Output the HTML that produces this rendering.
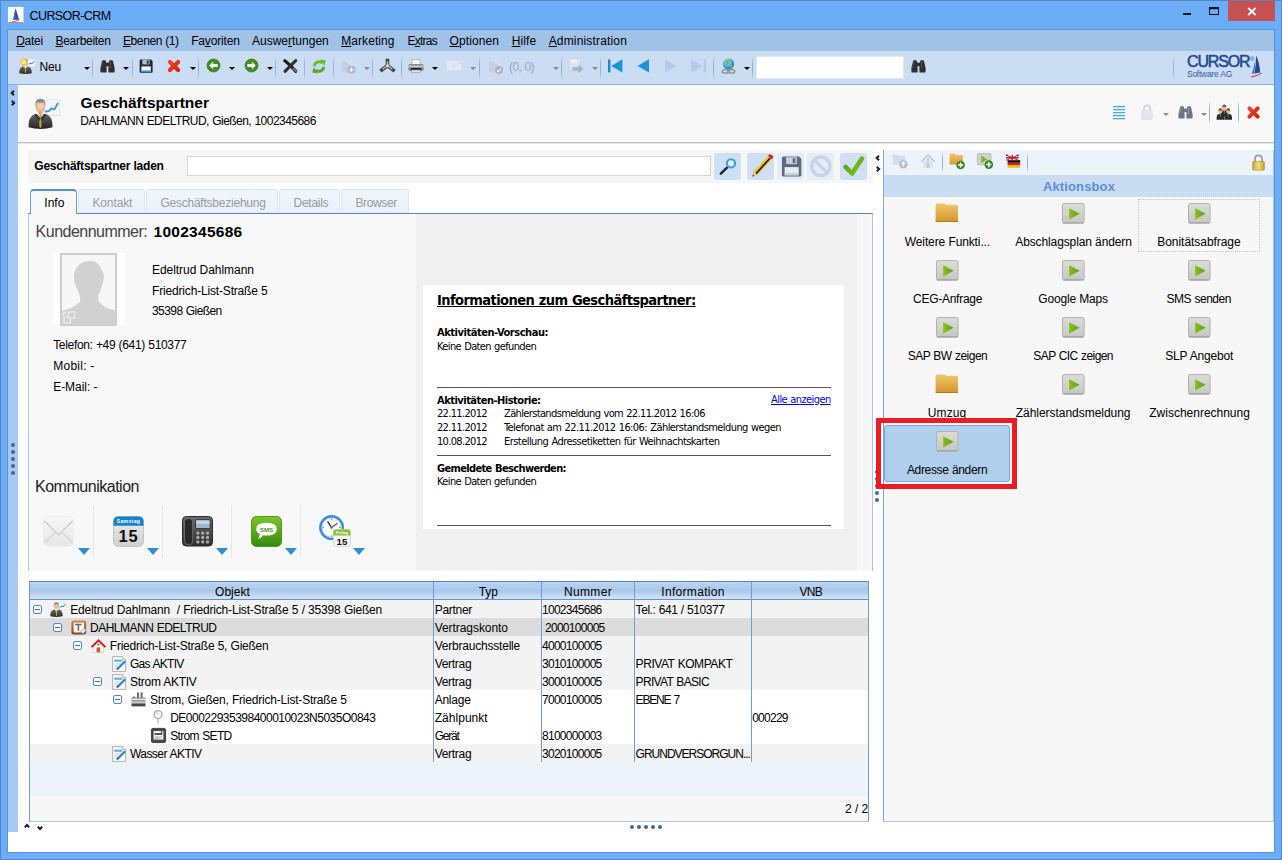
<!DOCTYPE html>
<html lang="de">
<head>
<meta charset="utf-8">
<title>CURSOR-CRM</title>
<style>
*{box-sizing:border-box;margin:0;padding:0}
html,body{width:1282px;height:860px;overflow:hidden;background:#6badf6}
body{font-family:"Liberation Sans",sans-serif;font-size:12px;color:#000;position:relative}
.a{position:absolute}
.t{position:absolute;white-space:nowrap;line-height:1}
svg{position:absolute;overflow:visible}
#frame{left:0;top:0;width:1282px;height:860px;background:#6badf6;border:1px solid #5584be}
#menubar{left:8px;top:30px;width:1266px;height:21px;background:#a1c2e7}
#toolbar{left:8px;top:51px;width:1266px;height:33px;background:#cbddf3}
#tbline{left:8px;top:84px;width:1266px;height:1px;background:#7fb2ec}
#content{left:8px;top:85px;width:1266px;height:767px;background:#fff}
#lstrip{left:8px;top:85px;width:10px;height:747px;background:#a7c9f5}
#header{left:18px;top:85px;width:1256px;height:57px;background:#f8f8f8}
#hline{left:18px;top:142px;width:1256px;height:2px;background:#bfbfbf;border-bottom:1px solid #e6e6e6}
.sep{position:absolute;width:1px;background:linear-gradient(#cbddf3,#8fb4e3 30%,#8fb4e3 70%,#cbddf3)}
.dd{position:absolute;width:0;height:0;border-left:3px solid transparent;border-right:3px solid transparent;border-top:3px solid #000}
.dd.g{border-top-color:#8c8c8c}

#loadrow{left:28px;top:150px;width:845px;height:33px;background:#f6f6f6}
#loadinput{left:187px;top:156px;width:524px;height:20px;background:#fff;border:1px solid #d4d4d4}
.lbtn{position:absolute;top:153px;width:27px;height:27px;border-radius:3px;background:#cfe0f5}
.lbtn.dis{background:#e4edf9}
.tab{position:absolute;top:189px;height:24px;background:linear-gradient(#f1f6fd,#e9f0fb);border:1px solid #dbe6f5;border-bottom:none;border-radius:3px 3px 0 0}
#tabinfo{left:30px;top:189px;width:47px;height:25px;background:#f8f8f8;border:1px solid #6c9ddc;border-top:2px solid #4f8fe0;border-bottom:none;border-radius:4px 4px 0 0}
#tabpanel{left:28px;top:213px;width:845px;height:358px;background:#f8f8f8;border:1px solid #a9c6ec;border-top:1px solid #4a86d8;border-bottom:none}
#htmlarea{left:416px;top:214px;width:441px;height:356px;background:#f0f0f0}
#htmlwhite{left:423px;top:285px;width:421px;height:244px;background:#fff}
.hr{position:absolute;left:437px;width:394px;height:1px;background:#555}
#photo{left:53px;top:253px;width:72px;height:72px;background:#fff}
.csep{position:absolute;top:506px;width:1px;height:52px;background:#e6e6e6}
.ctri{position:absolute;top:548px;width:0;height:0;border-left:6px solid transparent;border-right:6px solid transparent;border-top:7px solid #2e8fd6}
#tree{left:29px;top:581px;width:840px;height:241px;background:#f7f7f7;border:1px solid #6f9ddb;border-bottom-color:#a9c7ec}
#treehead{left:30px;top:581px;width:838px;height:19px;background:linear-gradient(#bdd4f1,#a9c6eb 50%,#d6e4f6);border-top:1px solid #4a86d8;border-bottom:1px solid #5b92dc}
.row{position:absolute;left:30px;width:838px;height:18px}
.vl{position:absolute;top:581px;width:1px;height:181px;background:#6f9ddb}
.exp{position:absolute;width:9px;height:9px;border:1px solid #4f86d4;border-radius:2px;background:#fff}
.exp:after{content:"";position:absolute;left:1px;top:3px;width:5px;height:1px;background:#3a6fc0}
#rpanel{left:883px;top:150px;width:391px;height:672px;background:#f7f7f7;border:1px solid #a9c7ec;border-left-color:#7ba7e0;border-top:none}
#rtool{left:884px;top:150px;width:389px;height:25px;background:#edf3fb}
#rhead{left:884px;top:175px;width:389px;height:22px;background:#c9dcf2}
#redbox{left:876px;top:418px;width:141px;height:71px;border:5px solid #ed1c24}
#selitem{left:884px;top:425px;width:126px;height:57px;background:#b1d0ee;border:1px solid #7aa6de;border-radius:3px}
#focus{left:1138px;top:199px;width:122px;height:53px;border:1px dotted #c2c2c2}
.dot{position:absolute;width:4px;height:4px;border-radius:50%;background:#46648e}
.rsep{position:absolute;top:152px;width:1px;height:21px;background:linear-gradient(#edf3fb,#8fb4e3 30%,#8fb4e3 70%,#edf3fb)}
</style>
</head>
<body>
<div id="frame" class="a"></div>
<div class="a" style="left:7px;top:29px;width:1268px;height:824px;border:1px solid #5a93d8"></div>
<!-- TITLEBAR -->
<div id="titlebar">
</div>
<!-- MENUBAR -->
<div id="menubar" class="a"></div>
<!-- TOOLBAR -->
<div id="toolbar" class="a"></div>
<div id="tbline" class="a"></div>
<!-- CONTENT -->
<div id="content" class="a"></div>
<div id="lstrip" class="a"></div>
<div id="header" class="a"></div>
<div id="hline" class="a"></div>
<!-- LEFTPANEL -->
<div id="loadrow" class="a"></div>
<div id="loadinput" class="a"></div>
<div class="lbtn" style="left:714px"></div>
<div class="lbtn" style="left:747px"></div>
<div class="lbtn dis" style="left:777px"></div>
<div class="lbtn dis" style="left:807px"></div>
<div class="lbtn" style="left:840px"></div>
<div class="tab" style="left:78px;width:67px"></div>
<div class="tab" style="left:146px;width:132px"></div>
<div class="tab" style="left:279px;width:61px"></div>
<div class="tab" style="left:341px;width:68px"></div>
<div id="tabpanel" class="a"></div>
<div id="tabinfo" class="a"></div>
<div id="htmlarea" class="a"></div>
<div class="a" style="left:857px;top:214px;width:12px;height:356px;background:#f7f7f7"></div>
<div id="htmlwhite" class="a"></div>
<div class="hr" style="top:387px"></div>
<div class="hr" style="top:455px"></div>
<div class="hr" style="top:525px"></div>
<div id="photo" class="a"></div>
<div class="csep" style="left:93px"></div>
<div class="csep" style="left:162px"></div>
<div class="csep" style="left:231px"></div>
<div class="csep" style="left:300px"></div>
<div class="ctri" style="left:78px"></div>
<div class="ctri" style="left:147px"></div>
<div class="ctri" style="left:216px"></div>
<div class="ctri" style="left:285px"></div>
<div class="ctri" style="left:353px"></div>

<!-- TREE -->
<div id="tree" class="a"></div>
<div class="row" style="top:600px;height:90px;background:#f3f3f3"></div>
<div class="row" style="top:618px;background:#dcdcdc"></div>
<div class="row" style="top:690px;height:54px;background:#fff"></div>
<div class="row" style="top:744px;background:#f3f3f3"></div>
<div class="row" style="top:762px;height:34px;background:#edf3fb"></div>
<div id="treehead" class="a"></div>
<div class="vl" style="left:433px"></div>
<div class="vl" style="left:541px"></div>
<div class="vl" style="left:634px"></div>
<div class="vl" style="left:751px"></div>
<div class="exp" style="left:33px;top:605px"></div>
<div class="exp" style="left:53px;top:623px"></div>
<div class="exp" style="left:73px;top:641px"></div>
<div class="exp" style="left:93px;top:677px"></div>
<div class="exp" style="left:113px;top:695px"></div>

<!-- RIGHTPANEL -->
<div id="rpanel" class="a"></div>
<div id="rtool" class="a"></div>
<div id="rhead" class="a"></div>
<div class="rsep" style="left:942px"></div>
<div class="rsep" style="left:1027px"></div>
<div id="focus" class="a"></div>
<div id="selitem" class="a"></div>
<div class="dot" style="left:11px;top:443px"></div>
<div class="dot" style="left:11px;top:450px"></div>
<div class="dot" style="left:11px;top:457px"></div>
<div class="dot" style="left:11px;top:464px"></div>
<div class="dot" style="left:11px;top:471px"></div>
<div class="dot" style="left:875px;top:470px"></div>
<div class="dot" style="left:875px;top:477px"></div>
<div class="dot" style="left:875px;top:484px"></div>
<div class="dot" style="left:875px;top:491px"></div>
<div class="dot" style="left:875px;top:498px"></div>
<div class="dot" style="left:630px;top:825px"></div>
<div class="dot" style="left:637px;top:825px"></div>
<div class="dot" style="left:644px;top:825px"></div>
<div class="dot" style="left:651px;top:825px"></div>
<div class="dot" style="left:658px;top:825px"></div>
<svg style="left:8px;top:7px" width="16" height="16" viewBox="0 0 16 16"><rect width="16" height="16" fill="#fdfdfd"/><rect y="15" width="16" height="1" fill="#9a9a9a"/><rect x="15" width="1" height="16" fill="#d8cfc0"/><path d="M7.6 1 L11 12.4 L5.2 12.9 Z" fill="#24509e"/><path d="M7.2 2.5 L7.6 12.7 L5 12.9 Z" fill="#3f6dbb"/><path d="M3.9 14.5 Q8 14 11.7 12 L11.5 13.1 Q8 15 4.1 15.2 Z" fill="#d9214c"/></svg>
<svg style="left:1183px;top:13px" width="8" height="2" viewBox="0 0 8 2"><rect width="8" height="2" fill="#111"/></svg>
<svg style="left:1209px;top:7px" width="10" height="8" viewBox="0 0 10 8"><rect x="0.5" y="0.5" width="9" height="7" fill="none" stroke="#111"/><rect width="10" height="2.2" fill="#111"/></svg>
<svg style="left:1228px;top:1px" width="47" height="20" viewBox="0 0 47 20"><rect width="47" height="20" fill="#c75050"/><path d="M20.2 7 L27.6 14 M27.6 7 L20.2 14" stroke="#fff" stroke-width="1.8"/></svg>
<svg style="left:18.7px;top:57.8px" width="17" height="16" viewBox="0 0 17 16"><defs><linearGradient id="g1" x1="0" y1="0" x2="0" y2="1"><stop offset="0" stop-color="#686868"/><stop offset="1" stop-color="#2a2a2a"/></linearGradient></defs><rect x="8.8" y="1.2" width="7.4" height="7.2" fill="#fafbfd" stroke="#d5dbe4" stroke-width="0.6"/><path d="M9.6 6.4 L11.6 5.2 L13 5.6 L15.4 3" fill="none" stroke="#2f9be0" stroke-width="1.1"/><path d="M0.3 15.3 Q0 9.6 3.8 8.4 L9.2 8.4 Q13 9.6 12.7 15.3 Q6.5 16.6 0.3 15.3Z" fill="url(#g1)"/><path d="M4.4 8.4 L6.5 10.6 L8.6 8.4 L7.4 7.8 L5.6 7.8Z" fill="#f4f4f4"/><path d="M5.8 9.2 L7.2 9.2 L7 14.4 L6.5 15.2 L6 14.4Z" fill="#d4ac1c"/><ellipse cx="6.5" cy="4.8" rx="2.7" ry="3.3" fill="#ecb893"/><path d="M5.2 2.6 Q5.6 0.9 7.4 1.1 Q9.2 1.5 9.2 4 Q8.6 2.6 7.2 2.6Z" fill="#8c8c8c"/><circle cx="5" cy="4.4" r="3.4" fill="#f2c63c" opacity="0.9"/><circle cx="4.8" cy="4.2" r="1.9" fill="#fdeea0"/><path d="M5 0.2 V1.2 M5 7.6 V8.6 M0.8 4.4 H1.8 M2 1.4 L2.7 2.1 M2 7.4 L2.7 6.7" stroke="#f2c63c" stroke-width="0.8"/></svg>
<svg style="left:84px;top:67px" width="6" height="3" viewBox="0 0 6 3"><path d="M0 0 L6 0 L3 3Z" fill="#000"/></svg>
<div class="sep" style="left:92px;top:56px;height:24px"></div>
<svg style="left:100px;top:59px" width="15" height="14" viewBox="0 0 15 14"><path d="M1.9 2.4 Q1.9 1.2 3.2 1.2 L4.6 1.2 Q5.9 1.2 5.9 2.4 L6.6 9 L6.6 12.4 Q6.6 13.6 5.4 13.6 L1.6 13.6 Q0.4 13.6 0.4 12.4 L0.4 9Z" fill="#2e2e2e"/><path d="M9.1 2.4 Q9.1 1.2 10.4 1.2 L11.8 1.2 Q13.1 1.2 13.1 2.4 L14.6 9 L14.6 12.4 Q14.6 13.6 13.4 13.6 L9.6 13.6 Q8.4 13.6 8.4 12.4 L8.4 9Z" fill="#2e2e2e"/><rect x="5.6" y="3.6" width="3.8" height="3.6" fill="#2e2e2e"/><path d="M2.4 2.6 L2.9 2.6 L2 9 L1.4 9Z M9.9 2.6 L10.5 2.6 L11 9 L10.3 9Z" fill="#6d6d6d"/></svg>
<svg style="left:123px;top:67px" width="6" height="3" viewBox="0 0 6 3"><path d="M0 0 L6 0 L3 3Z" fill="#000"/></svg>
<div class="sep" style="left:132px;top:56px;height:24px"></div>
<svg style="left:139px;top:59px" width="14" height="14" viewBox="0 0 14 14"><path d="M0.6 1.4 Q0.6 0.4 1.6 0.4 L12 0.4 L13.6 2 L13.6 12.8 Q13.6 13.7 12.6 13.7 L1.6 13.7 Q0.6 13.7 0.6 12.8Z" fill="#1c2a3c"/><rect x="3.4" y="0.8" width="7.2" height="4.6" fill="#b9c3cf"/><rect x="7.8" y="1.5" width="1.8" height="3.2" fill="#1c2a3c"/><rect x="2.4" y="7.4" width="9.4" height="5.4" fill="#f4f6f8"/><rect x="2.4" y="11.4" width="9.4" height="1.6" fill="#2c9be0"/></svg>
<svg style="left:167px;top:59px" width="14" height="14" viewBox="0 0 14 14"><defs><linearGradient id="g2" x1="0" y1="0" x2="1" y2="1"><stop offset="0" stop-color="#f0452a"/><stop offset="1" stop-color="#d61f10"/></linearGradient></defs><path d="M2.9 2.9 L11.1 11.1 M11.1 2.9 L2.9 11.1" stroke="url(#g2)" stroke-width="4.2" stroke-linecap="round"/></svg>
<svg style="left:190px;top:67px" width="6" height="3" viewBox="0 0 6 3"><path d="M0 0 L6 0 L3 3Z" fill="#000"/></svg>
<div class="sep" style="left:198px;top:56px;height:24px"></div>
<svg style="left:205.6px;top:58.2px" width="15" height="15" viewBox="0 0 15 15"><circle cx="7.5" cy="7.5" r="6.5" fill="#3f8f22" stroke="#357d1b" stroke-width="0.8"/><path d="M3.2 7.5 L7.2 3.8 L7.2 6 L11.6 6 L11.6 9 L7.2 9 L7.2 11.2Z" fill="#fff"/></svg>
<svg style="left:229px;top:67px" width="6" height="3" viewBox="0 0 6 3"><path d="M0 0 L6 0 L3 3Z" fill="#000"/></svg>
<svg style="left:243.5px;top:58.2px" width="15" height="15" viewBox="0 0 15 15"><circle cx="7.5" cy="7.5" r="6.5" fill="#3f8f22" stroke="#357d1b" stroke-width="0.8"/><path d="M11.8 7.5 L7.8 3.8 L7.8 6 L3.4 6 L3.4 9 L7.8 9 L7.8 11.2Z" fill="#fff"/></svg>
<svg style="left:267px;top:67px" width="6" height="3" viewBox="0 0 6 3"><path d="M0 0 L6 0 L3 3Z" fill="#000"/></svg>
<div class="sep" style="left:275px;top:56px;height:24px"></div>
<svg style="left:283px;top:59px" width="15" height="14" viewBox="0 0 15 14"><path d="M1.8 1.8 Q6 5 12.8 12.4" stroke="#1a1a1a" stroke-width="3.2" stroke-linecap="round" fill="none"/><path d="M12.8 1.6 Q8 6 2 12.4" stroke="#2e2e2e" stroke-width="3" stroke-linecap="round" fill="none"/><path d="M10 9.4 L13.4 12.8" stroke="#8a8a8a" stroke-width="1.4" stroke-linecap="round"/></svg>
<div class="sep" style="left:304px;top:56px;height:24px"></div>
<svg style="left:312px;top:58.5px" width="14" height="15" viewBox="0 0 14 15"><path d="M2.3 7.2 A5 5 0 0 1 10.4 3.8" stroke="#6cbb2a" stroke-width="3" fill="none"/><path d="M8.2 0.4 L13.8 1.4 L12.2 7Z" fill="#6cbb2a"/><path d="M11.7 7.8 A5 5 0 0 1 3.6 11.2" stroke="#5aa823" stroke-width="3" fill="none"/><path d="M5.8 14.6 L0.2 13.6 L1.8 8Z" fill="#5aa823"/></svg>
<div class="sep" style="left:333px;top:56px;height:24px"></div>
<svg style="left:341px;top:58.5px" width="15" height="15" viewBox="0 0 15 15"><path d="M5 0.6 L10.4 0.6 L12.4 2.8 L12.4 9 L5 9Z" fill="#d6deea"/><path d="M0.8 2.6 L7 2.6 L9.2 4.8 L9.2 13.4 L0.8 13.4Z" fill="#c4cfdf"/><path d="M7 2.6 L7 4.8 L9.2 4.8Z" fill="#e4eaf3"/><circle cx="10.4" cy="10.8" r="4" fill="#aeb7c4"/><path d="M10.4 8.6 V13 M8.2 10.8 H12.6" stroke="#f2f5fa" stroke-width="1.3"/></svg>
<svg style="left:364px;top:67px" width="6" height="3" viewBox="0 0 6 3"><path d="M0 0 L6 0 L3 3Z" fill="#8c8787"/></svg>
<div class="sep" style="left:372px;top:56px;height:24px"></div>
<svg style="left:380px;top:60px" width="15" height="12" viewBox="0 0 15 12"><path d="M7.5 0.6 V5.6 M7.5 5.6 L1.8 10 M7.5 5.6 L13.2 10" stroke="#454545" stroke-width="3.6" stroke-linecap="square" fill="none"/><path d="M7.5 1.4 V5.4 M7.2 5.8 L2.6 9.2 M7.8 5.8 L12.4 9.2" stroke="#cfc8b8" stroke-width="1.3" fill="none"/><circle cx="7.5" cy="5.8" r="1.5" fill="#e8e2d2"/></svg>
<div class="sep" style="left:401px;top:56px;height:24px"></div>
<svg style="left:408px;top:59px" width="16" height="14" viewBox="0 0 16 14"><rect x="4" y="0.6" width="8" height="5" fill="#fbfbfb" stroke="#9a9a9a" stroke-width="0.6"/><path d="M2 5 L14 5 Q15.6 5 15.6 6.6 L15.6 10.8 Q15.6 12 14.4 12 L1.6 12 Q0.4 12 0.4 10.8 L0.4 6.6 Q0.4 5 2 5Z" fill="#8e8e8e"/><rect x="0.4" y="6.6" width="15.2" height="1.6" fill="#c9c9c9"/><rect x="2.6" y="9" width="10.8" height="1.8" fill="#222"/><rect x="3.4" y="11" width="9.2" height="2.2" fill="#e8e8e8" stroke="#777" stroke-width="0.5"/></svg>
<svg style="left:432px;top:67px" width="6" height="3" viewBox="0 0 6 3"><path d="M0 0 L6 0 L3 3Z" fill="#000"/></svg>
<svg style="left:446px;top:60px" width="16" height="11" viewBox="0 0 16 11"><rect x="0.4" y="0.4" width="15.2" height="10.2" rx="0.8" fill="#e3eaf5" stroke="#d3ddec" stroke-width="0.8"/><rect x="12.2" y="1.6" width="2.2" height="2.4" fill="#cfdaea"/><path d="M6 5.4 H11 M6 7 H10" stroke="#d0dbeb" stroke-width="0.8"/></svg>
<svg style="left:470px;top:67px" width="6" height="3" viewBox="0 0 6 3"><path d="M0 0 L6 0 L3 3Z" fill="#8c8787"/></svg>
<div class="sep" style="left:479px;top:56px;height:24px"></div>
<svg style="left:488px;top:58.5px" width="16" height="15" viewBox="0 0 16 15"><path d="M5.6 0.6 L11 0.6 L13 2.8 L13 9 L5.6 9Z" fill="#d6deea"/><path d="M1 2.6 L7.4 2.6 L9.6 4.8 L9.6 13.6 L1 13.6Z" fill="#c4cfdf"/><path d="M7.4 2.6 L7.4 4.8 L9.6 4.8Z" fill="#e4eaf3"/><circle cx="11" cy="11" r="4" fill="#a9b2c0"/><path d="M9 11.2 L10.4 12.6 L13 9.6" stroke="#eef2f8" stroke-width="1.3" fill="none"/></svg>
<svg style="left:553px;top:67px" width="6" height="3" viewBox="0 0 6 3"><path d="M0 0 L6 0 L3 3Z" fill="#8c8787"/></svg>
<div class="sep" style="left:561px;top:56px;height:24px"></div>
<svg style="left:568px;top:58px" width="16" height="15" viewBox="0 0 16 15"><rect x="0.6" y="0.6" width="12" height="12.4" rx="0.8" fill="#dbe3ef" stroke="#c3cedd" stroke-width="0.7"/><rect x="3" y="1.6" width="6.4" height="3.6" fill="#eef2f8"/><path d="M4.4 9.2 L10.4 9.2 L10.4 6.6 L15.6 11 L10.4 15.2 L10.4 12.8 L4.4 12.8Z" fill="#a8b4c6"/></svg>
<svg style="left:592px;top:67px" width="6" height="3" viewBox="0 0 6 3"><path d="M0 0 L6 0 L3 3Z" fill="#8c8787"/></svg>
<div class="sep" style="left:600px;top:56px;height:24px"></div>
<svg style="left:607.5px;top:59px" width="15" height="14" viewBox="0 0 15 14"><rect x="0" y="0.4" width="2.4" height="13" fill="#1b87d2"/><path d="M14.4 0.2 L14.4 13.6 L3.2 6.9Z" fill="#1b93dc"/></svg>
<svg style="left:637px;top:59px" width="12" height="14" viewBox="0 0 12 14"><path d="M12 0.2 L12 13.6 L0.4 6.9Z" fill="#1b93dc"/></svg>
<svg style="left:665px;top:59px" width="12" height="14" viewBox="0 0 12 14"><path d="M0 0.2 L0 13.6 L11.6 6.9Z" fill="#b5c9e6"/></svg>
<svg style="left:691px;top:59px" width="15" height="14" viewBox="0 0 15 14"><rect x="12.6" y="0.4" width="2.4" height="13" fill="#b5c9e6"/><path d="M0.4 0.2 L0.4 13.6 L11.6 6.9Z" fill="#b5c9e6"/></svg>
<div class="sep" style="left:713px;top:56px;height:24px"></div>
<svg style="left:721px;top:57.5px" width="15" height="16" viewBox="0 0 15 16"><defs><radialGradient id="g3" cx="0.4" cy="0.35" r="0.7"><stop offset="0" stop-color="#bfe6ff"/><stop offset="0.6" stop-color="#3b9fe0"/><stop offset="1" stop-color="#1c6cb5"/></radialGradient></defs><circle cx="7.5" cy="6" r="5.6" fill="url(#g3)"/><path d="M4.4 3.2 Q6.4 1.6 8 2.6 Q9.4 4 7.8 5.6 Q6.8 7.6 5.2 7 Q3.2 5.6 4.4 3.2Z M9 7.4 Q11 6.6 11.6 8 Q11 10 9.6 10.2 Q8.4 9 9 7.4Z" fill="#69c33a"/><ellipse cx="4.4" cy="13.4" rx="3.2" ry="1.8" fill="none" stroke="#8d8d8d" stroke-width="1.3"/><ellipse cx="10.6" cy="13.4" rx="3.2" ry="1.8" fill="none" stroke="#8d8d8d" stroke-width="1.3"/><rect x="6" y="12.6" width="3" height="1.6" fill="#9a9a9a"/></svg>
<svg style="left:744px;top:67px" width="6" height="3" viewBox="0 0 6 3"><path d="M0 0 L6 0 L3 3Z" fill="#000"/></svg>
<div class="sep" style="left:752px;top:56px;height:24px"></div>
<div class="a" style="left:756px;top:56px;width:148px;height:23px;background:#fff;border:1px solid #dfe6ef"></div>
<svg style="left:911px;top:59px" width="15" height="14" viewBox="0 0 15 14"><path d="M1.9 2.4 Q1.9 1.2 3.2 1.2 L4.6 1.2 Q5.9 1.2 5.9 2.4 L6.6 9 L6.6 12.4 Q6.6 13.6 5.4 13.6 L1.6 13.6 Q0.4 13.6 0.4 12.4 L0.4 9Z" fill="#2e2e2e"/><path d="M9.1 2.4 Q9.1 1.2 10.4 1.2 L11.8 1.2 Q13.1 1.2 13.1 2.4 L14.6 9 L14.6 12.4 Q14.6 13.6 13.4 13.6 L9.6 13.6 Q8.4 13.6 8.4 12.4 L8.4 9Z" fill="#2e2e2e"/><rect x="5.6" y="3.6" width="3.8" height="3.6" fill="#2e2e2e"/><path d="M2.4 2.6 L2.9 2.6 L2 9 L1.4 9Z M9.9 2.6 L10.5 2.6 L11 9 L10.3 9Z" fill="#6d6d6d"/></svg>
<div class="sep" style="left:1173px;top:56px;height:24px"></div>
<svg style="left:1251px;top:55px" width="11" height="23" viewBox="0 0 11 23"><path d="M5.2 0.6 Q8.6 8 9.2 17.6 L3.4 18.6 Q5.4 9 5.2 0.6Z" fill="#1f4a94"/><path d="M4.4 4 Q4.6 12 2.8 18.6 L0.8 18.8 Q3.4 12 4.4 4Z" fill="#3c68b4"/><path d="M0 21.6 Q6 20.6 10.8 17.4 L10.4 18.8 Q5.6 21.8 0.2 22.6Z" fill="#d9214c"/></svg>
<svg style="left:28px;top:98px" width="32" height="32" viewBox="0 0 32 32"><defs><linearGradient id="g4" x1="0" y1="0" x2="0" y2="1"><stop offset="0" stop-color="#646464"/><stop offset="1" stop-color="#242424"/></linearGradient><radialGradient id="g4h" cx="0.5" cy="0.45" r="0.6"><stop offset="0" stop-color="#fbd9c4"/><stop offset="1" stop-color="#e3a07e"/></radialGradient></defs><rect x="16.8" y="2" width="14.8" height="15.6" fill="#fbfcfe" stroke="#d6dce5" stroke-width="0.8"/><path d="M19 3 V16.6 M21.4 3 V16.6 M23.8 3 V16.6 M26.2 3 V16.6 M28.6 3 V16.6 M17.6 5 H31 M17.6 7.6 H31 M17.6 10.2 H31 M17.6 12.8 H31 M17.6 15.2 H31" stroke="#e6ebf2" stroke-width="0.6"/><path d="M17.8 13.5 L21.3 12.9 L23.4 10.3 L26.6 11.4 L29.7 5.4" fill="none" stroke="#2a9de0" stroke-width="1.8" stroke-linecap="round" stroke-linejoin="round"/><path d="M0.5 29.3 Q0 18.6 7 16 L18 16 Q25 18.6 24.6 29.3 Q12.5 32.6 0.5 29.3Z" fill="url(#g4)"/><path d="M8.6 15.8 L12.4 20.4 L16.2 15.8 L14 14.4 L10.8 14.4Z" fill="#f6f6f6"/><path d="M10 13 L14.8 13 L14.4 15.4 L12.4 17 L10.4 15.4Z" fill="#e0a284"/><path d="M11.2 16.6 L13.6 16.6 L13.4 28.2 L12.4 30.6 L11.4 28.2Z" fill="#cfa61a"/><path d="M8.6 15.8 L12.4 20.4 L10.6 24 L6.6 17Z M16.2 15.8 L12.4 20.4 L14.2 24 L18.2 17Z" fill="#3a3a3a"/><ellipse cx="12.4" cy="8.8" rx="4.8" ry="6" fill="url(#g4h)"/><path d="M7.4 9 Q6.4 0.8 12.4 0.8 Q18.4 0.8 17.4 9 Q17 4.4 14.4 4.2 Q12.4 5.2 10.4 4.2 Q7.8 4.4 7.4 9Z" fill="#8a8a8a"/></svg>
<svg style="left:1113px;top:106px" width="12" height="13" viewBox="0 0 12 13"><rect x="0" y="0" width="12" height="1.3" fill="#41aee0"/><rect x="0" y="3" width="12" height="1.3" fill="#41aee0"/><rect x="0" y="6" width="12" height="1.3" fill="#41aee0"/><rect x="0" y="9" width="12" height="1.3" fill="#41aee0"/><rect x="0" y="12" width="12" height="1.3" fill="#41aee0"/></svg>
<svg style="left:1141px;top:104px" width="12" height="16" viewBox="0 0 12 16"><path d="M3 7 V4.6 Q3 1.4 6 1.4 Q9 1.4 9 4.6 V7" fill="none" stroke="#c9d2e0" stroke-width="1.7"/><rect x="0.6" y="6.6" width="10.8" height="8.8" rx="1.2" fill="#dfe6f0" stroke="#d0d8e6" stroke-width="0.6"/></svg>
<svg style="left:1163px;top:113px" width="6" height="3" viewBox="0 0 6 3"><path d="M0 0 L6 0 L3 3Z" fill="#8c8787"/></svg>
<svg style="left:1177.5px;top:105px" width="15" height="14" viewBox="0 0 15 14"><path d="M1.9 2.4 Q1.9 1.2 3.2 1.2 L4.6 1.2 Q5.9 1.2 5.9 2.4 L6.6 9 L6.6 12.4 Q6.6 13.6 5.4 13.6 L1.6 13.6 Q0.4 13.6 0.4 12.4 L0.4 9Z" fill="#6a7686"/><path d="M9.1 2.4 Q9.1 1.2 10.4 1.2 L11.8 1.2 Q13.1 1.2 13.1 2.4 L14.6 9 L14.6 12.4 Q14.6 13.6 13.4 13.6 L9.6 13.6 Q8.4 13.6 8.4 12.4 L8.4 9Z" fill="#6a7686"/><rect x="5.6" y="3.6" width="3.8" height="3.6" fill="#6a7686"/><path d="M2.4 2.6 L2.9 2.6 L2 9 L1.4 9Z M9.9 2.6 L10.5 2.6 L11 9 L10.3 9Z" fill="#a9b4c2"/></svg>
<svg style="left:1201px;top:113px" width="6" height="3" viewBox="0 0 6 3"><path d="M0 0 L6 0 L3 3Z" fill="#8c8787"/></svg>
<div class="sep" style="left:1209px;top:101px;height:24px;background:linear-gradient(#f8f8f8,#8fb4e3 30%,#8fb4e3 70%,#f8f8f8)"></div>
<div class="sep" style="left:1238px;top:101px;height:24px;background:linear-gradient(#f8f8f8,#8fb4e3 30%,#8fb4e3 70%,#f8f8f8)"></div>
<svg style="left:1216px;top:104px" width="17" height="16" viewBox="0 0 17 16"><path d="M4.300000000000001 12.6 Q3.9000000000000004 7.2 6.700000000000001 6.6 L9.9 6.6 Q12.700000000000001 7.2 12.3 12.6Z" fill="#2c2c2c"/><path d="M7.6000000000000005 6.800000000000001 L9.0 6.800000000000001 L8.3 10.6Z" fill="#27b3a7"/><ellipse cx="8.3" cy="3.6" rx="2.1" ry="2.6" fill="#e9b48f"/><path d="M6.1000000000000005 3.2 Q6.300000000000001 0.6000000000000001 8.3 0.6000000000000001 Q10.3 0.6000000000000001 10.5 3.2 Q8.3 1.8 6.1000000000000005 3.2Z" fill="#6b4a2f"/><path d="M0.6000000000000005 15.75 Q0.22000000000000064 10.620000000000001 2.8800000000000003 10.05 L5.92 10.05 Q8.58 10.620000000000001 8.2 15.75Z" fill="#2c2c2c"/><path d="M3.7350000000000003 10.24 L5.065 10.24 L4.4 13.85Z" fill="#27b3a7"/><ellipse cx="4.4" cy="7.2" rx="1.9949999999999999" ry="2.4699999999999998" fill="#e9b48f"/><path d="M2.3100000000000005 6.82 Q2.5000000000000004 4.3500000000000005 4.4 4.3500000000000005 Q6.300000000000001 4.3500000000000005 6.49 6.82 Q4.4 5.49 2.3100000000000005 6.82Z" fill="#6b4a2f"/><path d="M8.399999999999999 15.75 Q8.02 10.620000000000001 10.68 10.05 L13.719999999999999 10.05 Q16.38 10.620000000000001 16.0 15.75Z" fill="#2c2c2c"/><path d="M11.535 10.24 L12.864999999999998 10.24 L12.2 13.85Z" fill="#27b3a7"/><ellipse cx="12.2" cy="7.2" rx="1.9949999999999999" ry="2.4699999999999998" fill="#e9b48f"/><path d="M10.11 6.82 Q10.299999999999999 4.3500000000000005 12.2 4.3500000000000005 Q14.1 4.3500000000000005 14.29 6.82 Q12.2 5.49 10.11 6.82Z" fill="#6b4a2f"/></svg>
<svg style="left:1246.5px;top:105.5px" width="13" height="13" viewBox="0 0 13 13"><defs><linearGradient id="g5" x1="0" y1="0" x2="1" y2="1"><stop offset="0" stop-color="#f0452a"/><stop offset="1" stop-color="#d61f10"/></linearGradient></defs><path d="M2.4 2.4 L10.6 10.6 M10.6 2.4 L2.4 10.6" stroke="url(#g5)" stroke-width="4" stroke-linecap="round"/></svg>
<svg style="left:10px;top:90px" width="6" height="6" viewBox="0 0 6 6"><path d="M4 0.8 L1.7 3 L4 5.2" fill="none" stroke="#1a2430" stroke-width="2.1"/></svg>
<svg style="left:10px;top:100px" width="6" height="6" viewBox="0 0 6 6"><path d="M1.8 0.8 L4.1 3 L1.8 5.2" fill="none" stroke="#1a2430" stroke-width="2.1"/></svg>
<svg style="left:875px;top:155px" width="6" height="6" viewBox="0 0 6 6"><path d="M4 0.8 L1.7 3 L4 5.2" fill="none" stroke="#1a2430" stroke-width="2.1"/></svg>
<svg style="left:875px;top:165.5px" width="6" height="6" viewBox="0 0 6 6"><path d="M1.8 0.8 L4.1 3 L1.8 5.2" fill="none" stroke="#1a2430" stroke-width="2.1"/></svg>
<svg style="left:24px;top:822.8px" width="6" height="6" viewBox="0 0 6 6"><path d="M0.8 4.2 L3 1.9 L5.2 4.2" fill="none" stroke="#1a2430" stroke-width="2.1"/></svg>
<svg style="left:37px;top:824.8px" width="6" height="6" viewBox="0 0 6 6"><path d="M0.8 1.8 L3 4.1 L5.2 1.8" fill="none" stroke="#1a2430" stroke-width="2.1"/></svg>
<svg style="left:716px;top:155px" width="23" height="23" viewBox="0 0 23 23"><path d="M4.8 18.6 L11 12.6" stroke="#1c2a38" stroke-width="2.5" stroke-linecap="round"/><circle cx="15" cy="8.4" r="4.1" fill="#dcecf8" stroke="#39a0dc" stroke-width="2.1"/></svg>
<svg style="left:749px;top:154px" width="25" height="25" viewBox="0 0 25 25"><path d="M3.4 22.6 L4.6 17.6 L19 1.8 L22.8 5.2 L8.4 21Z" fill="#f2c21c"/><path d="M6.2 19.4 L20.6 3.4 L21.8 4.4 L7.4 20.4Z" fill="#1a1a1a"/><path d="M3.4 22.6 L4.6 17.6 L8.4 21Z" fill="#e9c9a0"/><path d="M3.4 22.6 L3.9 20.6 L5.4 21.9Z" fill="#333"/><path d="M19 1.8 L20.2 0.6 Q21.4 0 22.6 1 L23.6 2 Q24.6 3 23.8 4.2 L22.8 5.2Z" fill="#d9202a"/></svg>
<svg style="left:780.5px;top:155.5px" width="21" height="21" viewBox="0 0 14 14"><path d="M0.6 1.4 Q0.6 0.4 1.6 0.4 L12 0.4 L13.6 2 L13.6 12.8 Q13.6 13.7 12.6 13.7 L1.6 13.7 Q0.6 13.7 0.6 12.8Z" fill="#5d6b7d"/><rect x="3.4" y="0.8" width="7.2" height="4.6" fill="#c9d0da"/><rect x="7.8" y="1.5" width="1.8" height="3.2" fill="#5d6b7d"/><rect x="2.4" y="7.4" width="9.4" height="5.4" fill="#e9edf2"/><rect x="2.4" y="11.4" width="9.4" height="1.6" fill="#c6ccd4"/></svg>
<svg style="left:809px;top:155px" width="23" height="23" viewBox="0 0 23 23"><circle cx="11.8" cy="11.2" r="9.2" fill="none" stroke="#c6d4e8" stroke-width="3.4"/><path d="M5.4 5 L18 17.6" stroke="#c6d4e8" stroke-width="3.4"/></svg>
<svg style="left:842px;top:155px" width="23" height="23" viewBox="0 0 23 23"><defs><linearGradient id="g6" x1="0" y1="0" x2="1" y2="1"><stop offset="0" stop-color="#4f9a16"/><stop offset="1" stop-color="#8cc320"/></linearGradient></defs><path d="M3.6 12 L10.2 18.6 L20 3.6" fill="none" stroke="url(#g6)" stroke-width="4.6" stroke-linecap="round" stroke-linejoin="round"/></svg>
<svg style="left:53px;top:253px" width="72" height="72" viewBox="0 0 72 72"><rect width="72" height="72" fill="#fff"/><rect x="8" y="1" width="55" height="71" fill="#f7f7f7" stroke="#cdcdcd" stroke-width="2"/><path d="M35.8 7.9 C42 7.5 46.5 11 48 16 C50.5 19 51.2 23 50.6 25 C50.8 28 49.5 31 48.6 33.5 C48 37 46.8 40 45.1 42 L45.4 47.5 C47 50 51 53.5 54.4 55 C58 56.5 61 56.8 63 57.5 L63 72 L8 72 L8 58 C11 57 15 56.5 18.4 55 C22 53 25 51 27.1 48.6 L27.1 42.8 C26 41.5 25.6 40 25.4 38.2 C23 34 21 30 20.9 25.4 C20.8 21 21.5 18.5 23 16 C26 11 30 8.2 35.8 7.9 Z" fill="#d1d1d1"/><rect x="11" y="64" width="6.4" height="6" fill="#d1d1d1" stroke="#ececec" stroke-width="1.2"/><rect x="15.4" y="59" width="6.4" height="6" fill="#d1d1d1" stroke="#ececec" stroke-width="1.2"/><path d="M9.6 62.4 Q10 59.4 13 59.2" fill="none" stroke="#ececec" stroke-width="1.4"/></svg>
<svg style="left:43px;top:515.5px" width="31" height="31" viewBox="0 0 32 32"><defs><linearGradient id="g7" x1="0" y1="0" x2="0" y2="1"><stop offset="0" stop-color="#f7f7f7"/><stop offset="1" stop-color="#e6e6e6"/></linearGradient></defs><rect x="0.5" y="0.5" width="31" height="31" rx="6" fill="url(#g7)" stroke="#ececec"/><path d="M1.4 27.6 L12.4 17 M30.6 27.6 L19.6 17" stroke="#d4d4d4" stroke-width="1.2" fill="none"/><path d="M1.2 5 L16 19.6 L30.8 5" stroke="#cdcdcd" stroke-width="1.4" fill="none"/></svg>
<svg style="left:112.5px;top:515.5px" width="31" height="31" viewBox="0 0 32 32"><defs><linearGradient id="g8" x1="0" y1="0" x2="0" y2="1"><stop offset="0" stop-color="#efefef"/><stop offset="1" stop-color="#cfcfcf"/></linearGradient></defs><rect x="0.5" y="0.5" width="31" height="31" rx="5" fill="url(#g8)" stroke="#c4c4c4"/><path d="M0.5 10 L0.5 5.5 Q0.5 0.5 5.5 0.5 L26.5 0.5 Q31.5 0.5 31.5 5.5 L31.5 10Z" fill="#1583c6"/><text x="16" y="7.6" text-anchor="middle" font-family="Liberation Sans,sans-serif" font-size="5.2" font-weight="700" fill="#fff" letter-spacing="0.4">Samstag</text><text x="16" y="26.4" text-anchor="middle" font-family="Liberation Sans,sans-serif" font-size="17" font-weight="700" fill="#111" letter-spacing="0.8">15</text></svg>
<svg style="left:181.5px;top:515.5px" width="31" height="31" viewBox="0 0 32 32"><defs><linearGradient id="g9" x1="0" y1="0" x2="0" y2="1"><stop offset="0" stop-color="#6a6a6a"/><stop offset="1" stop-color="#2e2e2e"/></linearGradient></defs><rect x="0.5" y="0.5" width="31" height="30.5" rx="4" fill="url(#g9)" stroke="#2a2a2a"/><rect x="2.6" y="2.6" width="8.4" height="27" rx="3.4" fill="#2a2a2a" stroke="#7a7a7a" stroke-width="0.8"/><rect x="14" y="4" width="15" height="9" rx="1" fill="#9fb6c8" stroke="#222" stroke-width="0.8"/><rect x="14.6" y="4.6" width="13.8" height="3.6" fill="#c4d6e4"/><circle cx="16.4" cy="17.6" r="1.7" fill="#ababab"/><circle cx="16.4" cy="22.200000000000003" r="1.7" fill="#ababab"/><circle cx="16.4" cy="26.8" r="1.7" fill="#ababab"/><circle cx="21.4" cy="17.6" r="1.7" fill="#ababab"/><circle cx="21.4" cy="22.200000000000003" r="1.7" fill="#ababab"/><circle cx="21.4" cy="26.8" r="1.7" fill="#ababab"/><circle cx="26.4" cy="17.6" r="1.7" fill="#ababab"/><circle cx="26.4" cy="22.200000000000003" r="1.7" fill="#ababab"/><circle cx="26.4" cy="26.8" r="1.7" fill="#ababab"/></svg>
<svg style="left:250.5px;top:515.5px" width="31" height="31" viewBox="0 0 32 32"><defs><linearGradient id="g10" x1="0" y1="0" x2="0" y2="1"><stop offset="0" stop-color="#7cc42c"/><stop offset="1" stop-color="#368a0c"/></linearGradient></defs><rect x="0.5" y="0.5" width="31" height="31" rx="5" fill="url(#g10)" stroke="#4a9a18"/><path d="M16 7 Q26.6 7 26.6 13.6 Q26.6 20.2 16 20.2 Q14 20.2 12.4 19.8 Q10.6 23 7.2 23.6 Q9.4 21.4 9 18.4 Q5.4 16.6 5.4 13.6 Q5.4 7 16 7Z" fill="#fff"/><text x="16" y="16" text-anchor="middle" font-family="Liberation Sans,sans-serif" font-size="6.4" font-weight="700" fill="#4a9a18">SMS</text></svg>
<svg style="left:319px;top:514.5px" width="32" height="32" viewBox="0 0 32 32"><circle cx="12.6" cy="12.6" r="11.2" fill="#fff" stroke="#3a8fd8" stroke-width="2.6"/><circle cx="12.6" cy="12.6" r="9.6" fill="none" stroke="#bcd9f2" stroke-width="1"/><path d="M12.6 12.6 L8.6 6.4" stroke="#333" stroke-width="1.4"/><path d="M12.6 12.6 L18.4 8.2" stroke="#d92020" stroke-width="1.2"/><circle cx="12.6" cy="12.6" r="1.4" fill="#3a8fd8"/><path d="M12.6 3.4 V5 M12.6 20.2 V21.8 M3.4 12.6 H5 M20.2 12.6 H21.8" stroke="#3a8fd8" stroke-width="1"/><rect x="14.4" y="14.6" width="17" height="17" rx="2.4" fill="#f6f6f6" stroke="#cfcfcf" stroke-width="0.8"/><path d="M14.4 20.6 L14.4 17 Q14.4 14.6 16.8 14.6 L29 14.6 Q31.4 14.6 31.4 17 L31.4 20.6Z" fill="#86c232"/><text x="22.9" y="19" text-anchor="middle" font-family="Liberation Sans,sans-serif" font-size="3.6" font-weight="700" fill="#fff">Freitag</text><text x="22.9" y="29.6" text-anchor="middle" font-family="Liberation Sans,sans-serif" font-size="9.6" font-weight="700" fill="#111">15</text></svg>
<svg style="left:49.8px;top:601.2px" width="17" height="16" viewBox="0 0 17 16"><defs><linearGradient id="g11" x1="0" y1="0" x2="0" y2="1"><stop offset="0" stop-color="#686868"/><stop offset="1" stop-color="#2a2a2a"/></linearGradient></defs><rect x="8.8" y="1.2" width="7.4" height="7.2" fill="#fafbfd" stroke="#d5dbe4" stroke-width="0.6"/><path d="M9.6 6.4 L11.6 5.2 L13 5.6 L15.4 3" fill="none" stroke="#2f9be0" stroke-width="1.1"/><path d="M0.3 15.3 Q0 9.6 3.8 8.4 L9.2 8.4 Q13 9.6 12.7 15.3 Q6.5 16.6 0.3 15.3Z" fill="url(#g11)"/><path d="M4.4 8.4 L6.5 10.6 L8.6 8.4 L7.4 7.8 L5.6 7.8Z" fill="#f4f4f4"/><path d="M5.8 9.2 L7.2 9.2 L7 14.4 L6.5 15.2 L6 14.4Z" fill="#d4ac1c"/><ellipse cx="6.5" cy="4.8" rx="2.7" ry="3.3" fill="#ecb893"/><path d="M3.7 4.6 Q3.6 1.2 6.5 1.2 Q9.4 1.2 9.3 4.6 Q8.6 2.8 6.5 2.9 Q4.4 2.8 3.7 4.6Z" fill="#8c8c8c"/></svg>
<svg style="left:70.5px;top:619.5px" width="16" height="15" viewBox="0 0 16 15"><defs><linearGradient id="g12" x1="0" y1="0" x2="0" y2="1"><stop offset="0" stop-color="#d48a34"/><stop offset="1" stop-color="#8c3c16"/></linearGradient></defs><rect x="0.4" y="0.4" width="14.8" height="14.2" rx="2.4" fill="url(#g12)"/><rect x="2.6" y="2.6" width="10.4" height="9.8" rx="0.8" fill="#f4f4f4"/><path d="M4.2 4.6 H10.6 M7.4 4.6 V10.8" stroke="#6a6a6a" stroke-width="1.5"/><path d="M9.6 11.6 L13.6 8.4 L15.4 10 L12 13.8Z" fill="#eaf3fb" stroke="#4f9bd8" stroke-width="0.7"/></svg>
<svg style="left:89.5px;top:637.5px" width="17" height="15" viewBox="0 0 17 15"><rect x="3.2" y="7" width="10.6" height="7.4" fill="#f6f6f6" stroke="#c8c8c8" stroke-width="0.6"/><rect x="6.6" y="9.4" width="3.6" height="5" fill="#b5682c"/><rect x="7.6" y="5.6" width="1.8" height="1.8" fill="#7a7a7a"/><path d="M0.8 8.4 L8.5 1 L16.2 8.4 L14.8 9.8 L8.5 3.8 L2.2 9.8Z" fill="#d41c1c"/></svg>
<svg style="left:112px;top:655.5px" width="15" height="16" viewBox="0 0 15 16"><path d="M0.6 0.6 L10.6 0.6 L13.6 3.6 L13.6 15.4 L0.6 15.4Z" fill="#fbfbfb" stroke="#a9a9a9" stroke-width="0.9"/><path d="M10.6 0.6 L10.6 3.6 L13.6 3.6" fill="#e2e2e2" stroke="#a9a9a9" stroke-width="0.7"/><rect x="2.2" y="3.6" width="8" height="2.2" fill="#5bb5e8"/><path d="M2.4 8 H9 M2.4 10.2 H7.2 M2.4 12.4 H6" stroke="#c4c4c4" stroke-width="0.9"/><path d="M4.6 13.8 L5.4 11.4 L12.4 4.4 L14 6 L7 13Z" fill="#2f86d6"/><path d="M4.6 13.8 L5.4 11.4 L7 13Z" fill="#1a3f70"/></svg>
<svg style="left:112px;top:673.5px" width="15" height="16" viewBox="0 0 15 16"><path d="M0.6 0.6 L10.6 0.6 L13.6 3.6 L13.6 15.4 L0.6 15.4Z" fill="#fbfbfb" stroke="#a9a9a9" stroke-width="0.9"/><path d="M10.6 0.6 L10.6 3.6 L13.6 3.6" fill="#e2e2e2" stroke="#a9a9a9" stroke-width="0.7"/><rect x="2.2" y="3.6" width="8" height="2.2" fill="#5bb5e8"/><path d="M2.4 8 H9 M2.4 10.2 H7.2 M2.4 12.4 H6" stroke="#c4c4c4" stroke-width="0.9"/><path d="M4.6 13.8 L5.4 11.4 L12.4 4.4 L14 6 L7 13Z" fill="#2f86d6"/><path d="M4.6 13.8 L5.4 11.4 L7 13Z" fill="#1a3f70"/></svg>
<svg style="left:112px;top:745.5px" width="15" height="16" viewBox="0 0 15 16"><path d="M0.6 0.6 L10.6 0.6 L13.6 3.6 L13.6 15.4 L0.6 15.4Z" fill="#fbfbfb" stroke="#a9a9a9" stroke-width="0.9"/><path d="M10.6 0.6 L10.6 3.6 L13.6 3.6" fill="#e2e2e2" stroke="#a9a9a9" stroke-width="0.7"/><rect x="2.2" y="3.6" width="8" height="2.2" fill="#5bb5e8"/><path d="M2.4 8 H9 M2.4 10.2 H7.2 M2.4 12.4 H6" stroke="#c4c4c4" stroke-width="0.9"/><path d="M4.6 13.8 L5.4 11.4 L12.4 4.4 L14 6 L7 13Z" fill="#2f86d6"/><path d="M4.6 13.8 L5.4 11.4 L7 13Z" fill="#1a3f70"/></svg>
<svg style="left:131px;top:692px" width="15" height="15" viewBox="0 0 15 15"><rect x="6" y="0.4" width="2" height="5.6" fill="#6a6a6a"/><rect x="9.6" y="0.4" width="2" height="5.6" fill="#6a6a6a"/><path d="M0.6 5.4 L4 4 L4 5.4 L14.4 5.4 L14.4 13 L0.6 13Z" fill="#8a8a8a"/><rect x="0.6" y="6.6" width="13.8" height="1.6" fill="#dfe9f2"/><rect x="0.6" y="9.4" width="13.8" height="1.4" fill="#c9d6e2"/><rect x="0.6" y="12" width="13.8" height="2.4" fill="#4a4a4a"/></svg>
<svg style="left:153px;top:709.5px" width="10" height="14" viewBox="0 0 10 14"><circle cx="5" cy="4.6" r="4" fill="#fafafa" stroke="#a8a8a8" stroke-width="1.2"/><path d="M5 4.6 L3.4 2.8" stroke="#999" stroke-width="0.8"/><rect x="4.4" y="8.6" width="1.2" height="5" fill="#b4b4b4"/></svg>
<svg style="left:151px;top:727.5px" width="15" height="15" viewBox="0 0 15 15"><rect x="0.4" y="0.4" width="14.2" height="14.2" rx="1.6" fill="#4a4646" stroke="#2c2a2a" stroke-width="0.8"/><rect x="2.6" y="3" width="9.8" height="8.6" fill="#f1f1f1"/><rect x="3.6" y="5" width="7.8" height="2" fill="#555"/><circle cx="10.6" cy="4" r="0.9" fill="#e02020"/><path d="M4 9 H11 M4 10.4 H8" stroke="#999" stroke-width="0.7"/></svg>
<svg style="left:892px;top:153px" width="16" height="16" viewBox="0 0 16 16"><path d="M0.6 2.6 Q0.6 1.4 1.8 1.4 L5.4 1.4 L6.8 2.8 L12.6 2.8 Q13.6 2.8 13.6 3.8 L13.6 11.4 L0.6 11.4Z" fill="#d3dcea"/><circle cx="11.4" cy="11.4" r="4.2" fill="#b3bcca"/><path d="M11.4 14 V9.4 M9.4 11.2 L11.4 9 L13.4 11.2" stroke="#eef2f8" stroke-width="1.3" fill="none"/></svg>
<svg style="left:920px;top:153px" width="16" height="16" viewBox="0 0 16 16"><path d="M0.6 8.4 L8 1 L15.4 8.4 L14.4 9.4 L8 3.2 L1.6 9.4Z" fill="#b9c6da"/><rect x="3" y="7" width="10" height="8" fill="#dde5f0"/><rect x="6.4" y="9.6" width="3.2" height="5.4" fill="#bfcbdc"/><rect x="7" y="5.4" width="2" height="2" fill="#aab6c8"/></svg>
<svg style="left:949px;top:152.5px" width="18" height="17" viewBox="0 0 18 17"><defs><linearGradient id="g13" x1="0" y1="0" x2="0" y2="1"><stop offset="0" stop-color="#eec56a"/><stop offset="1" stop-color="#d59a2c"/></linearGradient></defs><path d="M0.6 1.6 Q0.6 0.6 1.6 0.6 L5.4 0.6 L6.8 2 L12.8 2 Q13.8 2 13.8 3 L13.8 11.4 L0.6 11.4Z" fill="url(#g13)"/><circle cx="11.6" cy="12" r="4.3" fill="#2f8a1c"/><path d="M11.6 9.4 V14.6 M9.0 12 H14.2" stroke="#fff" stroke-width="1.5"/></svg>
<svg style="left:977px;top:153px" width="18" height="17" viewBox="0 0 18 17"><rect x="0.4" y="0.6" width="13.6" height="11" rx="1" fill="#d0d0cc" stroke="#b0b0ac" stroke-width="0.7"/><path d="M4.4 2.4 L10.4 6.2 L4.4 10Z" fill="#76b82a"/><circle cx="11.8" cy="11.6" r="4.3" fill="#2f8a1c"/><path d="M11.8 9.0 V14.2 M9.200000000000001 11.6 H14.4" stroke="#fff" stroke-width="1.5"/></svg>
<svg style="left:1006px;top:155px" width="15" height="13" viewBox="0 0 15 13"><rect x="0" y="0" width="12.6" height="5.4" fill="#f4f4f8"/><path d="M0 0 L12.6 5.4 M12.6 0 L0 5.4" stroke="#c8202c" stroke-width="1"/><path d="M6.3 0 V5.4 M0 2.7 H12.6" stroke="#c8202c" stroke-width="1.6"/><path d="M0 0.6 L2 0 M10.6 0 L12.6 0.6" stroke="#24408c" stroke-width="1.2"/><rect x="1.6" y="5.2" width="12.6" height="2.6" fill="#111"/><rect x="1.6" y="7.8" width="12.6" height="2.6" fill="#d81e1e"/><rect x="1.6" y="10.4" width="12.6" height="2.4" fill="#f2c200"/></svg>
<svg style="left:1251.5px;top:153.5px" width="13" height="17" viewBox="0 0 13 17"><defs><linearGradient id="g14" x1="0" y1="0" x2="1" y2="0"><stop offset="0" stop-color="#caa23a"/><stop offset="0.5" stop-color="#f4dc82"/><stop offset="1" stop-color="#c69a30"/></linearGradient></defs><path d="M3 8 V5 Q3 1.4 6.5 1.4 Q10 1.4 10 5 V8" fill="none" stroke="#9a9a9a" stroke-width="1.7"/><rect x="0.6" y="7.4" width="11.8" height="8.8" rx="1" fill="url(#g14)" stroke="#b48c28" stroke-width="0.6"/></svg>
<svg style="left:935px;top:203.2px" width="24" height="20" viewBox="0 0 24 20"><defs><linearGradient id="g15" x1="0" y1="0" x2="0" y2="1"><stop offset="0" stop-color="#efc76e"/><stop offset="1" stop-color="#d4952a"/></linearGradient></defs><path d="M0.6 2.2 Q0.6 0.6 2.2 0.6 L9.4 0.6 Q10.6 0.6 11 1.8 L21.4 1.8 Q23 1.8 23 3.4 L23 18.6 L0.6 18.6Z" fill="url(#g15)"/><rect x="0.6" y="18" width="22.4" height="1" fill="#b87c1c"/></svg>
<svg style="left:1061.5px;top:203.2px" width="23" height="21" viewBox="0 0 23 21"><defs><linearGradient id="g16" x1="0" y1="0" x2="0" y2="1"><stop offset="0" stop-color="#dcdcd8"/><stop offset="1" stop-color="#c6c6c2"/></linearGradient><linearGradient id="g16t" x1="0" y1="0" x2="1" y2="0"><stop offset="0" stop-color="#8cc010"/><stop offset="1" stop-color="#58a02a"/></linearGradient></defs><rect x="0.5" y="0.5" width="21.6" height="19.6" rx="1.6" fill="url(#g16)" stroke="#b2b2ae"/><rect x="1" y="19.4" width="20.6" height="1" fill="#9c9c98"/><path d="M7.2 5.2 L17.6 10.8 L7.2 16.4Z" fill="url(#g16t)"/></svg>
<svg style="left:1187.5px;top:203.2px" width="23" height="21" viewBox="0 0 23 21"><defs><linearGradient id="g17" x1="0" y1="0" x2="0" y2="1"><stop offset="0" stop-color="#dcdcd8"/><stop offset="1" stop-color="#c6c6c2"/></linearGradient><linearGradient id="g17t" x1="0" y1="0" x2="1" y2="0"><stop offset="0" stop-color="#8cc010"/><stop offset="1" stop-color="#58a02a"/></linearGradient></defs><rect x="0.5" y="0.5" width="21.6" height="19.6" rx="1.6" fill="url(#g17)" stroke="#b2b2ae"/><rect x="1" y="19.4" width="20.6" height="1" fill="#9c9c98"/><path d="M7.2 5.2 L17.6 10.8 L7.2 16.4Z" fill="url(#g17t)"/></svg>
<svg style="left:935.5px;top:260.2px" width="23" height="21" viewBox="0 0 23 21"><defs><linearGradient id="g18" x1="0" y1="0" x2="0" y2="1"><stop offset="0" stop-color="#dcdcd8"/><stop offset="1" stop-color="#c6c6c2"/></linearGradient><linearGradient id="g18t" x1="0" y1="0" x2="1" y2="0"><stop offset="0" stop-color="#8cc010"/><stop offset="1" stop-color="#58a02a"/></linearGradient></defs><rect x="0.5" y="0.5" width="21.6" height="19.6" rx="1.6" fill="url(#g18)" stroke="#b2b2ae"/><rect x="1" y="19.4" width="20.6" height="1" fill="#9c9c98"/><path d="M7.2 5.2 L17.6 10.8 L7.2 16.4Z" fill="url(#g18t)"/></svg>
<svg style="left:1061.5px;top:260.2px" width="23" height="21" viewBox="0 0 23 21"><defs><linearGradient id="g19" x1="0" y1="0" x2="0" y2="1"><stop offset="0" stop-color="#dcdcd8"/><stop offset="1" stop-color="#c6c6c2"/></linearGradient><linearGradient id="g19t" x1="0" y1="0" x2="1" y2="0"><stop offset="0" stop-color="#8cc010"/><stop offset="1" stop-color="#58a02a"/></linearGradient></defs><rect x="0.5" y="0.5" width="21.6" height="19.6" rx="1.6" fill="url(#g19)" stroke="#b2b2ae"/><rect x="1" y="19.4" width="20.6" height="1" fill="#9c9c98"/><path d="M7.2 5.2 L17.6 10.8 L7.2 16.4Z" fill="url(#g19t)"/></svg>
<svg style="left:1187.5px;top:260.2px" width="23" height="21" viewBox="0 0 23 21"><defs><linearGradient id="g20" x1="0" y1="0" x2="0" y2="1"><stop offset="0" stop-color="#dcdcd8"/><stop offset="1" stop-color="#c6c6c2"/></linearGradient><linearGradient id="g20t" x1="0" y1="0" x2="1" y2="0"><stop offset="0" stop-color="#8cc010"/><stop offset="1" stop-color="#58a02a"/></linearGradient></defs><rect x="0.5" y="0.5" width="21.6" height="19.6" rx="1.6" fill="url(#g20)" stroke="#b2b2ae"/><rect x="1" y="19.4" width="20.6" height="1" fill="#9c9c98"/><path d="M7.2 5.2 L17.6 10.8 L7.2 16.4Z" fill="url(#g20t)"/></svg>
<svg style="left:935.5px;top:317.2px" width="23" height="21" viewBox="0 0 23 21"><defs><linearGradient id="g21" x1="0" y1="0" x2="0" y2="1"><stop offset="0" stop-color="#dcdcd8"/><stop offset="1" stop-color="#c6c6c2"/></linearGradient><linearGradient id="g21t" x1="0" y1="0" x2="1" y2="0"><stop offset="0" stop-color="#8cc010"/><stop offset="1" stop-color="#58a02a"/></linearGradient></defs><rect x="0.5" y="0.5" width="21.6" height="19.6" rx="1.6" fill="url(#g21)" stroke="#b2b2ae"/><rect x="1" y="19.4" width="20.6" height="1" fill="#9c9c98"/><path d="M7.2 5.2 L17.6 10.8 L7.2 16.4Z" fill="url(#g21t)"/></svg>
<svg style="left:1061.5px;top:317.2px" width="23" height="21" viewBox="0 0 23 21"><defs><linearGradient id="g22" x1="0" y1="0" x2="0" y2="1"><stop offset="0" stop-color="#dcdcd8"/><stop offset="1" stop-color="#c6c6c2"/></linearGradient><linearGradient id="g22t" x1="0" y1="0" x2="1" y2="0"><stop offset="0" stop-color="#8cc010"/><stop offset="1" stop-color="#58a02a"/></linearGradient></defs><rect x="0.5" y="0.5" width="21.6" height="19.6" rx="1.6" fill="url(#g22)" stroke="#b2b2ae"/><rect x="1" y="19.4" width="20.6" height="1" fill="#9c9c98"/><path d="M7.2 5.2 L17.6 10.8 L7.2 16.4Z" fill="url(#g22t)"/></svg>
<svg style="left:1187.5px;top:317.2px" width="23" height="21" viewBox="0 0 23 21"><defs><linearGradient id="g23" x1="0" y1="0" x2="0" y2="1"><stop offset="0" stop-color="#dcdcd8"/><stop offset="1" stop-color="#c6c6c2"/></linearGradient><linearGradient id="g23t" x1="0" y1="0" x2="1" y2="0"><stop offset="0" stop-color="#8cc010"/><stop offset="1" stop-color="#58a02a"/></linearGradient></defs><rect x="0.5" y="0.5" width="21.6" height="19.6" rx="1.6" fill="url(#g23)" stroke="#b2b2ae"/><rect x="1" y="19.4" width="20.6" height="1" fill="#9c9c98"/><path d="M7.2 5.2 L17.6 10.8 L7.2 16.4Z" fill="url(#g23t)"/></svg>
<svg style="left:935px;top:374.2px" width="24" height="20" viewBox="0 0 24 20"><defs><linearGradient id="g24" x1="0" y1="0" x2="0" y2="1"><stop offset="0" stop-color="#efc76e"/><stop offset="1" stop-color="#d4952a"/></linearGradient></defs><path d="M0.6 2.2 Q0.6 0.6 2.2 0.6 L9.4 0.6 Q10.6 0.6 11 1.8 L21.4 1.8 Q23 1.8 23 3.4 L23 18.6 L0.6 18.6Z" fill="url(#g24)"/><rect x="0.6" y="18" width="22.4" height="1" fill="#b87c1c"/></svg>
<svg style="left:1061.5px;top:374.2px" width="23" height="21" viewBox="0 0 23 21"><defs><linearGradient id="g25" x1="0" y1="0" x2="0" y2="1"><stop offset="0" stop-color="#dcdcd8"/><stop offset="1" stop-color="#c6c6c2"/></linearGradient><linearGradient id="g25t" x1="0" y1="0" x2="1" y2="0"><stop offset="0" stop-color="#8cc010"/><stop offset="1" stop-color="#58a02a"/></linearGradient></defs><rect x="0.5" y="0.5" width="21.6" height="19.6" rx="1.6" fill="url(#g25)" stroke="#b2b2ae"/><rect x="1" y="19.4" width="20.6" height="1" fill="#9c9c98"/><path d="M7.2 5.2 L17.6 10.8 L7.2 16.4Z" fill="url(#g25t)"/></svg>
<svg style="left:1187.5px;top:374.2px" width="23" height="21" viewBox="0 0 23 21"><defs><linearGradient id="g26" x1="0" y1="0" x2="0" y2="1"><stop offset="0" stop-color="#dcdcd8"/><stop offset="1" stop-color="#c6c6c2"/></linearGradient><linearGradient id="g26t" x1="0" y1="0" x2="1" y2="0"><stop offset="0" stop-color="#8cc010"/><stop offset="1" stop-color="#58a02a"/></linearGradient></defs><rect x="0.5" y="0.5" width="21.6" height="19.6" rx="1.6" fill="url(#g26)" stroke="#b2b2ae"/><rect x="1" y="19.4" width="20.6" height="1" fill="#9c9c98"/><path d="M7.2 5.2 L17.6 10.8 L7.2 16.4Z" fill="url(#g26t)"/></svg>
<svg style="left:935.5px;top:431.2px" width="23" height="21" viewBox="0 0 23 21"><defs><linearGradient id="g27" x1="0" y1="0" x2="0" y2="1"><stop offset="0" stop-color="#dcdcd8"/><stop offset="1" stop-color="#c6c6c2"/></linearGradient><linearGradient id="g27t" x1="0" y1="0" x2="1" y2="0"><stop offset="0" stop-color="#8cc010"/><stop offset="1" stop-color="#58a02a"/></linearGradient></defs><rect x="0.5" y="0.5" width="21.6" height="19.6" rx="1.6" fill="url(#g27)" stroke="#b2b2ae"/><rect x="1" y="19.4" width="20.6" height="1" fill="#9c9c98"/><path d="M7.2 5.2 L17.6 10.8 L7.2 16.4Z" fill="url(#g27t)"/></svg>
<div class="t" style="left:29.5px;top:10px;font-size:12.5px;letter-spacing:-0.58px;">CURSOR-CRM</div>
<div class="t" style="left:16.2px;top:35px;font-size:12px;letter-spacing:-0.25px;"><u>D</u>atei</div>
<div class="t" style="left:55.5px;top:35px;font-size:12px;letter-spacing:-0.30px;"><u>B</u>earbeiten</div>
<div class="t" style="left:123.0px;top:35px;font-size:12px;letter-spacing:-0.41px;word-spacing:0.41px;"><u>E</u>benen (1)</div>
<div class="t" style="left:191.2px;top:35px;font-size:12px;letter-spacing:-0.17px;">Fa<u>v</u>oriten</div>
<div class="t" style="left:252.0px;top:35px;font-size:12px;letter-spacing:-0.00px;">Auswe<u>r</u>tungen</div>
<div class="t" style="left:341.2px;top:35px;font-size:12px;letter-spacing:0.07px;"><u>M</u>arketing</div>
<div class="t" style="left:407.5px;top:35px;font-size:12px;letter-spacing:-0.76px;">E<u>x</u>tras</div>
<div class="t" style="left:449.5px;top:35px;font-size:12px;letter-spacing:0.10px;"><u>O</u>ptionen</div>
<div class="t" style="left:511.7px;top:35px;font-size:12px;letter-spacing:0.10px;"><u>H</u>ilfe</div>
<div class="t" style="left:548.7px;top:35px;font-size:12px;letter-spacing:0.16px;"><u>A</u>dministration</div>
<div class="t" style="left:39.5px;top:61px;font-size:12px;letter-spacing:-0.17px;">Neu</div>
<div class="t" style="left:509.0px;top:61px;font-size:12px;letter-spacing:-0.60px;word-spacing:0.60px;color:#9aa7b8;">(0, 0)</div>
<div class="t" style="left:1187.0px;top:54px;font-size:16px;letter-spacing:-1.14px;color:#1f4a94;-webkit-text-stroke:0.55px #1f4a94;">CURSOR</div>
<div class="t" style="left:1250.0px;top:56px;font-size:6px;color:#1f4a94;">®</div>
<div class="t" style="left:1187.0px;top:70px;font-size:8.5px;letter-spacing:-0.27px;word-spacing:0.27px;color:#3c5a96;">Software AG</div>
<div class="t" style="left:80.6px;top:95px;font-size:15.5px;letter-spacing:0.00px;font-weight:700;">Geschäftspartner</div>
<div class="t" style="left:80.3px;top:115px;font-size:12px;letter-spacing:-0.54px;word-spacing:0.54px;">DAHLMANN EDELTRUD, Gießen, 1002345686</div>
<div class="t" style="left:34.3px;top:160px;font-size:12px;letter-spacing:-0.22px;word-spacing:0.22px;font-weight:700;">Geschäftspartner laden</div>
<div class="t" style="left:44.3px;top:197px;font-size:12px;letter-spacing:-0.00px;">Info</div>
<div class="t" style="left:92.4px;top:197px;font-size:12px;letter-spacing:-0.11px;color:#9a9a9a;">Kontakt</div>
<div class="t" style="left:160.4px;top:197px;font-size:12px;letter-spacing:-0.23px;color:#9a9a9a;">Geschäftsbeziehung</div>
<div class="t" style="left:293.6px;top:197px;font-size:12px;letter-spacing:-0.28px;color:#9a9a9a;">Details</div>
<div class="t" style="left:355.4px;top:197px;font-size:12px;letter-spacing:-0.35px;color:#9a9a9a;">Browser</div>
<div class="t" style="left:35.6px;top:224px;font-size:16px;letter-spacing:-0.51px;color:#444;">Kundennummer:</div>
<div class="t" style="left:153.5px;top:224px;font-size:15.5px;letter-spacing:0.28px;font-weight:700;">1002345686</div>
<div class="t" style="left:152.0px;top:264px;font-size:12px;letter-spacing:-0.05px;">Edeltrud Dahlmann</div>
<div class="t" style="left:152.0px;top:285px;font-size:12px;letter-spacing:-0.17px;word-spacing:0.17px;">Friedrich-List-Straße 5</div>
<div class="t" style="left:152.0px;top:305px;font-size:12px;letter-spacing:-0.58px;word-spacing:0.58px;">35398 Gießen</div>
<div class="t" style="left:53.2px;top:339px;font-size:12px;letter-spacing:-0.33px;word-spacing:0.33px;">Telefon: +49 (641) 510377</div>
<div class="t" style="left:53.2px;top:360px;font-size:12px;letter-spacing:0.27px;word-spacing:-0.27px;">Mobil: -</div>
<div class="t" style="left:53.2px;top:381px;font-size:12px;letter-spacing:-0.05px;">E-Mail: -</div>
<div class="t" style="left:35.0px;top:479px;font-size:16px;letter-spacing:-0.48px;color:#222;">Kommunikation</div>
<div class="t" style="left:437.0px;top:293px;font-size:14.5px;letter-spacing:-0.58px;word-spacing:0.58px;font-weight:700;font-family:'DejaVu Sans Condensed','DejaVu Sans',sans-serif;text-decoration:underline;">Informationen zum Geschäftspartner:</div>
<div class="t" style="left:437.0px;top:327px;font-size:11px;letter-spacing:-0.46px;font-weight:700;font-family:'DejaVu Sans Condensed','DejaVu Sans',sans-serif;">Aktivitäten-Vorschau:</div>
<div class="t" style="left:437.0px;top:341px;font-size:11px;letter-spacing:-0.63px;word-spacing:0.63px;font-family:'DejaVu Sans Condensed','DejaVu Sans',sans-serif;">Keine Daten gefunden</div>
<div class="t" style="left:437.0px;top:395px;font-size:11px;letter-spacing:-0.51px;font-weight:700;font-family:'DejaVu Sans Condensed','DejaVu Sans',sans-serif;">Aktivitäten-Historie:</div>
<div class="t" style="left:771.0px;top:394px;font-size:11px;letter-spacing:-0.57px;word-spacing:0.57px;color:#0000ee;font-family:'DejaVu Sans Condensed','DejaVu Sans',sans-serif;text-decoration:underline;">Alle anzeigen</div>
<div class="t" style="left:437.0px;top:408px;font-size:11px;letter-spacing:-0.67px;font-family:'DejaVu Sans Condensed','DejaVu Sans',sans-serif;">22.11.2012</div>
<div class="t" style="left:504.0px;top:408px;font-size:11px;letter-spacing:-0.64px;word-spacing:0.64px;font-family:'DejaVu Sans Condensed','DejaVu Sans',sans-serif;">Zählerstandsmeldung vom 22.11.2012 16:06</div>
<div class="t" style="left:437.0px;top:422px;font-size:11px;letter-spacing:-0.67px;font-family:'DejaVu Sans Condensed','DejaVu Sans',sans-serif;">22.11.2012</div>
<div class="t" style="left:504.0px;top:422px;font-size:11px;letter-spacing:-0.57px;word-spacing:0.57px;font-family:'DejaVu Sans Condensed','DejaVu Sans',sans-serif;">Telefonat am 22.11.2012 16:06: Zählerstandsmeldung wegen</div>
<div class="t" style="left:437.0px;top:436px;font-size:11px;letter-spacing:-0.67px;font-family:'DejaVu Sans Condensed','DejaVu Sans',sans-serif;">10.08.2012</div>
<div class="t" style="left:504.0px;top:436px;font-size:11px;letter-spacing:-0.55px;word-spacing:0.55px;font-family:'DejaVu Sans Condensed','DejaVu Sans',sans-serif;">Erstellung Adressetiketten für Weihnachtskarten</div>
<div class="t" style="left:437.0px;top:463px;font-size:11px;letter-spacing:-0.65px;word-spacing:0.65px;font-weight:700;font-family:'DejaVu Sans Condensed','DejaVu Sans',sans-serif;">Gemeldete Beschwerden:</div>
<div class="t" style="left:437.0px;top:476px;font-size:11px;letter-spacing:-0.63px;word-spacing:0.63px;font-family:'DejaVu Sans Condensed','DejaVu Sans',sans-serif;">Keine Daten gefunden</div>
<div class="t" style="left:215.0px;top:586px;font-size:12px;letter-spacing:0.05px;">Objekt</div>
<div class="t" style="left:478.7px;top:586px;font-size:12px;letter-spacing:-0.11px;">Typ</div>
<div class="t" style="left:564.0px;top:586px;font-size:12px;letter-spacing:0.33px;">Nummer</div>
<div class="t" style="left:661.3px;top:586px;font-size:12px;letter-spacing:0.31px;">Information</div>
<div class="t" style="left:799.5px;top:586px;font-size:12px;letter-spacing:-0.73px;">VNB</div>
<div class="t" style="left:70.3px;top:604px;font-size:12px;letter-spacing:-0.19px;word-spacing:0.19px;">Edeltrud Dahlmann&nbsp; / Friedrich-List-Straße 5 / 35398 Gießen</div>
<div class="t" style="left:90.0px;top:622px;font-size:12px;letter-spacing:-0.50px;word-spacing:0.50px;">DAHLMANN EDELTRUD</div>
<div class="t" style="left:109.8px;top:640px;font-size:12px;letter-spacing:-0.23px;word-spacing:0.23px;">Friedrich-List-Straße 5, Gießen</div>
<div class="t" style="left:130.0px;top:658px;font-size:12px;letter-spacing:-0.72px;word-spacing:0.72px;">Gas AKTIV</div>
<div class="t" style="left:130.0px;top:676px;font-size:12px;letter-spacing:-0.28px;word-spacing:0.28px;">Strom AKTIV</div>
<div class="t" style="left:150.0px;top:694px;font-size:12px;letter-spacing:-0.21px;word-spacing:0.21px;">Strom, Gießen, Friedrich-List-Straße 5</div>
<div class="t" style="left:170.2px;top:712px;font-size:12px;letter-spacing:-0.51px;">DE00022935398400010023N5035O0843</div>
<div class="t" style="left:170.2px;top:730px;font-size:12px;letter-spacing:-0.66px;word-spacing:0.66px;">Strom SETD</div>
<div class="t" style="left:130.0px;top:748px;font-size:12px;letter-spacing:-0.56px;word-spacing:0.56px;">Wasser AKTIV</div>
<div class="t" style="left:434.7px;top:604px;font-size:12px;letter-spacing:-0.29px;">Partner</div>
<div class="t" style="left:434.7px;top:622px;font-size:12px;letter-spacing:-0.06px;">Vertragskonto</div>
<div class="t" style="left:434.7px;top:640px;font-size:12px;letter-spacing:-0.21px;">Verbrauchsstelle</div>
<div class="t" style="left:434.7px;top:658px;font-size:12px;letter-spacing:-0.30px;">Vertrag</div>
<div class="t" style="left:434.7px;top:676px;font-size:12px;letter-spacing:-0.30px;">Vertrag</div>
<div class="t" style="left:434.7px;top:694px;font-size:12px;letter-spacing:-0.25px;">Anlage</div>
<div class="t" style="left:434.7px;top:712px;font-size:12px;letter-spacing:0.04px;">Zählpunkt</div>
<div class="t" style="left:434.7px;top:730px;font-size:12px;letter-spacing:-1.20px;">Gerät</div>
<div class="t" style="left:434.7px;top:748px;font-size:12px;letter-spacing:-0.30px;">Vertrag</div>
<div class="t" style="left:542.0px;top:604px;font-size:12px;letter-spacing:-0.72px;">1002345686</div>
<div class="t" style="left:545.0px;top:622px;font-size:12px;letter-spacing:-0.72px;">2000100005</div>
<div class="t" style="left:542.0px;top:640px;font-size:12px;letter-spacing:-0.72px;">4000100005</div>
<div class="t" style="left:542.0px;top:658px;font-size:12px;letter-spacing:-0.72px;">3010100005</div>
<div class="t" style="left:542.0px;top:676px;font-size:12px;letter-spacing:-0.72px;">3000100005</div>
<div class="t" style="left:542.0px;top:694px;font-size:12px;letter-spacing:-0.72px;">7000100005</div>
<div class="t" style="left:542.0px;top:730px;font-size:12px;letter-spacing:-0.72px;">8100000003</div>
<div class="t" style="left:542.0px;top:748px;font-size:12px;letter-spacing:-0.72px;">3020100005</div>
<div class="t" style="left:635.6px;top:604px;font-size:12px;letter-spacing:-0.44px;word-spacing:0.44px;">Tel.: 641 / 510377</div>
<div class="t" style="left:635.6px;top:658px;font-size:12px;letter-spacing:-0.44px;word-spacing:0.44px;">PRIVAT KOMPAKT</div>
<div class="t" style="left:635.6px;top:676px;font-size:12px;letter-spacing:-0.66px;word-spacing:0.66px;">PRIVAT BASIC</div>
<div class="t" style="left:635.6px;top:694px;font-size:12px;letter-spacing:-1.20px;word-spacing:1.20px;">EBENE 7</div>
<div class="t" style="left:635.6px;top:748px;font-size:12px;letter-spacing:-1.00px;">GRUNDVERSORGUN...</div>
<div class="t" style="left:752.2px;top:712px;font-size:12px;letter-spacing:-0.74px;">000229</div>
<div class="t" style="left:845.0px;top:803px;font-size:12px;letter-spacing:-0.12px;word-spacing:0.12px;">2 / 2</div>
<div class="t" style="left:1043.0px;top:180px;font-size:13px;letter-spacing:0.12px;font-weight:700;color:#5b8fd9;">Aktionsbox</div>
<div class="t" style="left:904.8px;top:236px;font-size:12px;letter-spacing:-0.12px;word-spacing:0.12px;">Weitere Funkti...</div>
<div class="t" style="left:1015.3px;top:236px;font-size:12px;letter-spacing:-0.12px;word-spacing:0.12px;">Abschlagsplan ändern</div>
<div class="t" style="left:1157.3px;top:236px;font-size:12px;letter-spacing:-0.05px;">Bonitätsabfrage</div>
<div class="t" style="left:913.0px;top:293px;font-size:12px;letter-spacing:-0.26px;">CEG-Anfrage</div>
<div class="t" style="left:1038.3px;top:293px;font-size:12px;letter-spacing:-0.18px;word-spacing:0.18px;">Google Maps</div>
<div class="t" style="left:1166.5px;top:293px;font-size:12px;letter-spacing:-0.47px;word-spacing:0.47px;">SMS senden</div>
<div class="t" style="left:907.7px;top:350px;font-size:12px;letter-spacing:-0.51px;word-spacing:0.51px;">SAP BW zeigen</div>
<div class="t" style="left:1033.3px;top:350px;font-size:12px;letter-spacing:-0.57px;word-spacing:0.57px;">SAP CIC zeigen</div>
<div class="t" style="left:1165.2px;top:350px;font-size:12px;letter-spacing:-0.20px;word-spacing:0.20px;">SLP Angebot</div>
<div class="t" style="left:927.8px;top:407px;font-size:12px;letter-spacing:0.10px;">Umzug</div>
<div class="t" style="left:1015.7px;top:407px;font-size:12px;letter-spacing:-0.03px;">Zählerstandsmeldung</div>
<div class="t" style="left:1149.3px;top:407px;font-size:12px;letter-spacing:-0.01px;">Zwischenrechnung</div>
<div class="t" style="left:906.9px;top:464px;font-size:12px;letter-spacing:-0.33px;word-spacing:0.33px;">Adresse ändern</div>
<div id="redbox" class="a"></div>

</body>
</html>
